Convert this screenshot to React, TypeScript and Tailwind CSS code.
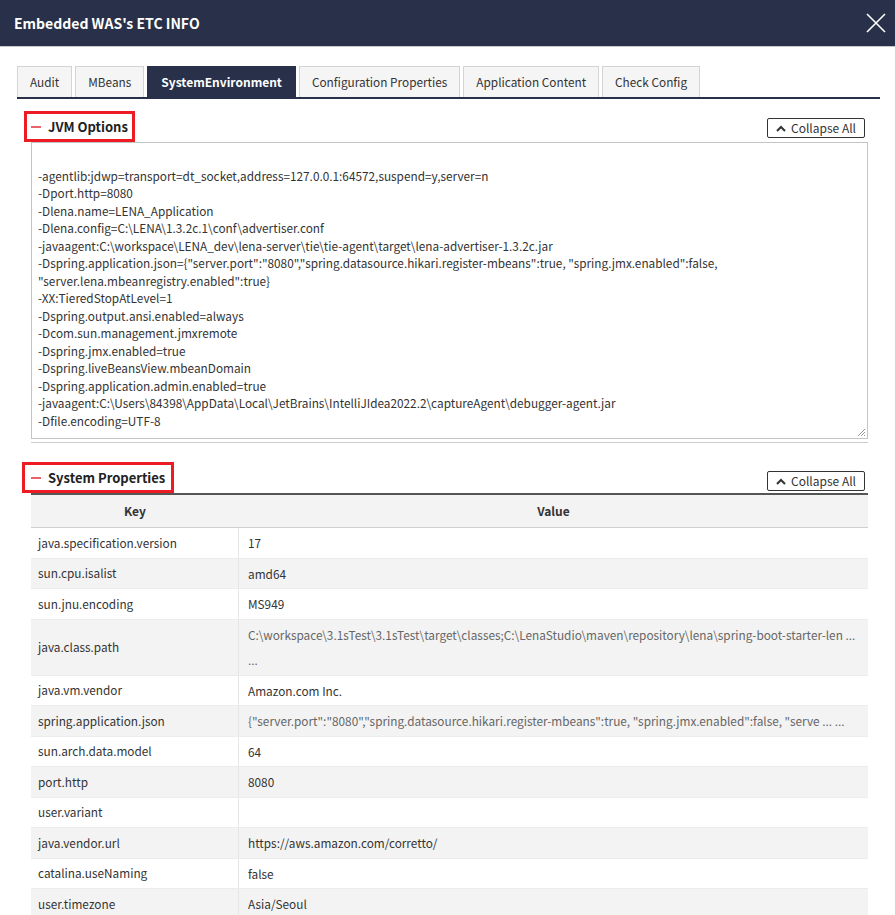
import React from "react";

const FONT = "font-['Noto_Sans_CJK_KR','Noto_Sans',sans-serif]";

const tabs = ["Audit", "MBeans", "SystemEnvironment", "Configuration Properties", "Application Content", "Check Config"];

const jvmLines = [
  "",
  "-agentlib:jdwp=transport=dt_socket,address=127.0.0.1:64572,suspend=y,server=n",
  "-Dport.http=8080",
  "-Dlena.name=LENA_Application",
  "-Dlena.config=C:\\LENA\\1.3.2c.1\\conf\\advertiser.conf",
  "-javaagent:C:\\workspace\\LENA_dev\\lena-server\\tie\\tie-agent\\target\\lena-advertiser-1.3.2c.jar",
  '-Dspring.application.json={"server.port":"8080","spring.datasource.hikari.register-mbeans":true, "spring.jmx.enabled":false,',
  '"server.lena.mbeanregistry.enabled":true}',
  "-XX:TieredStopAtLevel=1",
  "-Dspring.output.ansi.enabled=always",
  "-Dcom.sun.management.jmxremote",
  "-Dspring.jmx.enabled=true",
  "-Dspring.liveBeansView.mbeanDomain",
  "-Dspring.application.admin.enabled=true",
  "-javaagent:C:\\Users\\84398\\AppData\\Local\\JetBrains\\IntelliJIdea2022.2\\captureAgent\\debugger-agent.jar",
  "-Dfile.encoding=UTF-8",
];

const props: { k: string; v: string[]; dim?: boolean }[] = [
  { k: "java.specification.version", v: ["17"] },
  { k: "sun.cpu.isalist", v: ["amd64"] },
  { k: "sun.jnu.encoding", v: ["MS949"] },
  {
    k: "java.class.path",
    v: ["C:\\workspace\\3.1sTest\\3.1sTest\\target\\classes;C:\\LenaStudio\\maven\\repository\\lena\\spring-boot-starter-len ...", "..."],
    dim: true,
  },
  { k: "java.vm.vendor", v: ["Amazon.com Inc."] },
  {
    k: "spring.application.json",
    v: ['{"server.port":"8080","spring.datasource.hikari.register-mbeans":true, "spring.jmx.enabled":false, "serve ... ...'],
    dim: true,
  },
  { k: "sun.arch.data.model", v: ["64"] },
  { k: "port.http", v: ["8080"] },
  { k: "user.variant", v: [""] },
  { k: "java.vendor.url", v: ["https://aws.amazon.com/corretto/"] },
  { k: "catalina.useNaming", v: ["false"] },
  { k: "user.timezone", v: ["Asia/Seoul"] },
];

function CollapseButton() {
  return (
    <button className="h-[20px] w-[98px] flex items-center justify-center gap-[5px] border border-[#333] rounded-[2px] bg-white text-[12px] text-[#333] leading-none">
      <svg width="10" height="7" viewBox="0 0 10 7" fill="none">
        <path d="M1 6L5 2L9 6" stroke="#333" strokeWidth="2" />
      </svg>
      Collapse All
    </button>
  );
}

function SectionTitle({ label, shift }: { label: string; shift: string }) {
  return (
    <div className={`${shift} h-[31px] border-[3px] border-[#ed1c24] flex items-center gap-[7px]`}>
      <span className="block w-[10px] h-[2px] bg-[#e8646a]" />
      <span className="text-[13px] font-bold text-[#222] leading-none">{label}</span>
    </div>
  );
}

export default function App() {
  return (
    <div className={`${FONT} w-[895px] h-[915px] overflow-hidden bg-white text-[#333]`}>
      {/* modal header */}
      <div className="h-[47px] bg-[#283149] border-b border-[#c8c8c8] flex items-center justify-between pl-[14px] pr-[8px]">
        <h1 className="text-[14px] font-bold text-white">Embedded WAS's ETC INFO</h1>
        <svg width="22" height="22" viewBox="0 0 22 22" className="mb-[1px]">
          <path d="M2 2L20 20M20 2L2 20" stroke="white" strokeWidth="1.6" />
        </svg>
      </div>

      <div className="pl-[17px] pr-[15px] pt-[19px]">
        {/* tabs */}
        <div className="flex gap-[3px] border-b-2 border-[#283149]">
          {tabs.map((t) => (
            <div
              key={t}
              className={
                t === "SystemEnvironment"
                  ? "h-[31px] px-[14px] flex items-center bg-[#283149] text-white font-bold text-[12px]"
                  : "h-[31px] px-[12px] flex items-center bg-[#f5f5f5] border border-b-0 border-[#d4d4d4] text-[11.8px] text-[#333]"
              }
            >
              {t}
            </div>
          ))}
        </div>

        <div className="pl-[14px] pr-[12px]">
          {/* JVM options */}
          <div className="pt-[12px] border-b border-[#ccc] pb-[3px]">
            <div className="flex items-end justify-between">
              <SectionTitle label="JVM Options" shift="-ml-[7px] px-[4px]" />
              <div className="mb-[4px] mr-[3px]">
                <CollapseButton />
              </div>
            </div>
            <div className="relative h-[297px] border border-[#c4c4c4] pl-[6px] pt-[6px] text-[11.8px] leading-[17.5px] text-[#333]">
              {jvmLines.map((l, i) => (
                <div key={i} className="h-[17.5px] whitespace-pre">
                  {l}
                </div>
              ))}
              <svg width="9" height="9" viewBox="0 0 9 9" className="absolute right-[1px] bottom-[1px]">
                <path d="M8 1L1 8M8 4L4 8M8 7L7 8" stroke="#999" strokeWidth="1" />
              </svg>
            </div>
          </div>

          {/* System properties */}
          <div className="pt-[19px]">
            <div className="flex items-end justify-between">
              <SectionTitle label="System Properties" shift="-ml-[9px] px-[6px]" />
              <div className="mb-[2px] mr-[3px]">
                <CollapseButton />
              </div>
            </div>
            <div className="border-t-2 border-[#555]">
              <div className="flex h-[33px] bg-[#f3f3f3] border-b border-[#d0d0d0] text-[12px] font-bold text-[#333]">
                <div className="w-[208px] flex items-center justify-center">Key</div>
                <div className="flex-1 flex items-center justify-center">Value</div>
              </div>
              {props.map((p, i) => (
                <div
                  key={p.k}
                  className={`flex border-b border-[#ececec] text-[11.8px] ${i % 2 === 1 ? "bg-[#f3f3f3]" : "bg-white"} ${
                    p.v.length > 1 ? "h-[56px]" : "h-[30.5px]"
                  }`}
                >
                  <div className="w-[208px] flex items-center pl-[7px] border-r border-[#e6e6e6] text-[#333]">{p.k}</div>
                  <div
                    className={`flex-1 min-w-0 flex flex-col justify-center pl-[9px] leading-[25px] whitespace-nowrap ${
                      p.dim ? "text-[#666]" : "text-[#333]"
                    }`}
                  >
                    {p.v.map((v, j) => (
                      <div key={j}>{v}</div>
                    ))}
                  </div>
                </div>
              ))}
            </div>
          </div>
        </div>
      </div>
    </div>
  );
}
